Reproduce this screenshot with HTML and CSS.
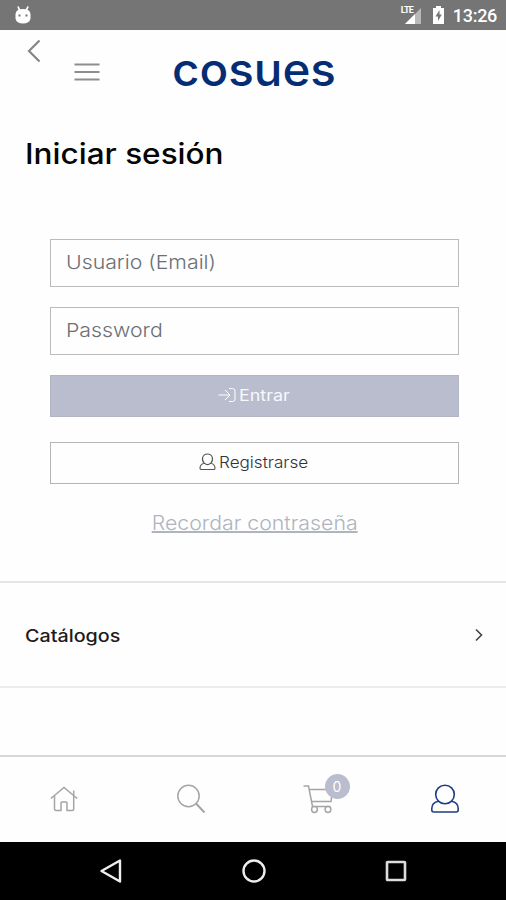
FILE: index.html
```html
<!DOCTYPE html>
<html lang="es">
<head>
<meta charset="utf-8">
<title>Iniciar sesión</title>
<link rel="stylesheet" href="styles.css">
</head>
<body>
<div class="status">
  <svg class="droid" width="18" height="20" viewBox="0 0 18 20"><path d="M4 1.500 5.500 5M14 1.500 12.500 5" stroke="#fff" stroke-width="1.800"/><path d="M1.500 9Q2 4 9 4t7.500 5v4.500Q15.500 18.500 9 18.500T1.500 13.500z" fill="#fff"/><path d="M4.500 9.500h2v2h-2zM11.500 9.500h2v2h-2z" fill="#777"/></svg>
  <span class="spacer"></span>
  <span class="signal"><span class="lte">LTE</span><svg width="22" height="20" viewBox="0 0 22 20"><path d="M5 18 21 2v16z" fill="#b9b9b9"/><path d="M5 18 15 8v10z" fill="#fff"/></svg></span>
  <svg class="battery" width="13" height="20" viewBox="0 0 13 20"><path d="M4 1h5v2h3v16H1V3h3z" fill="#fff"/><path d="M7.500 5 3.500 11.500h2.500V16l3.800-6.500H7.500z" fill="#757575"/></svg>
  <span class="clock">13:26</span>
</div>
<header class="header">
  <svg class="back" width="16" height="24" viewBox="0 0 16 24"><path d="M13.500 1.500 3 12 13.500 22.500" fill="none" stroke="#858585" stroke-width="2.200"/></svg>
  <svg class="burger" width="26" height="20" viewBox="0 0 26 20"><path d="M.5 2.500h25M.5 10h25M.5 17.500h25" stroke="#8d8d8d" stroke-width="1.900"/></svg>
  <svg class="logo" width="180" height="70" viewBox="0 0 180 70"><text y="50" textLength="164" lengthAdjust="spacingAndGlyphs" x="6">cosues</text></svg>
</header>
<main>
  <h1 class="title"><span class="wide">Iniciar sesión</span></h1>
  <form class="form">
    <div class="field"><span class="wide">Usuario (Email)</span></div>
    <div class="field"><span class="wide">Password</span></div>
    <div class="btn primary"><svg width="18" height="16" viewBox="0 0 18 16"><path d="M.5 8h11.500M7 3l5 5-5 5M11 1.500h3.500Q17 1.500 17 4v8q0 2.500-2.500 2.500H11" fill="none" stroke="#fff" stroke-width="1"/></svg><span class="wide">Entrar</span></div>
    <div class="btn outline"><svg width="17" height="18" viewBox="0 0 17 18"><path d="M5.300 10.200C2 7 3.200 1 8.500 1s6.500 6 3.200 9.200M5.300 10.200q3.200 2.800 6.400 0 4.300 1 4.300 5 0 1.300-1.300 1.300H2.300Q1 16.500 1 15.200q0-4 4.300-5z" fill="none" stroke="#555" stroke-width="1.100"/></svg><span class="wide">Registrarse</span></div>
    <a class="forgot">Recordar contraseña</a>
  </form>
  <div class="row"><span class="wide">Catálogos</span><svg width="10" height="14" viewBox="0 0 10 14"><path d="m2 1.500 5.500 5.500L2 12.500" fill="none" stroke="#444" stroke-width="1.600"/></svg></div>
</main>
<nav class="tabs">
  <svg width="28" height="28" viewBox="0 0 28 28"><path d="M.8 13.500 14 2.500l13.200 11M4.500 10.500V24q0 1.500 1.500 1.500h5V18q0-1 1-1h4q1 0 1 1v7.500h5.200q1.500 0 1.500-1.500V5.500" fill="none" stroke="#a5a5a5" stroke-width="1.500"/></svg>
  <svg width="30" height="30" viewBox="0 0 30 30"><circle cx="12.500" cy="12" r="10.700" fill="none" stroke="#a5a5a5" stroke-width="1.500"/><path d="m20 19.500 8.500 9" stroke="#a5a5a5" stroke-width="2"/></svg>
  <span class="cart"><svg width="30" height="30" viewBox="0 0 30 30"><path d="M.5 2H5.500L9.500 22.500h18M6.500 5.500h23L28 17.500H8.500" fill="none" stroke="#a5a5a5" stroke-width="1.500"/><g fill="#fff" stroke="#a5a5a5" stroke-width="1.500"><circle cx="11.500" cy="25.500" r="2.900"/><circle cx="25" cy="25.500" r="2.900"/></g></svg><b class="badge">0</b></span>
  <svg width="28" height="30" viewBox="0 0 28 30"><g fill="none" stroke="#213c83" stroke-width="1.600"><circle cx="14" cy="10.500" r="9.300"/><path d="M7.500 17.300Q.8 18.500.8 24.500V26q0 2 2 2h22.400q2 0 2-2v-1.500q0-6-6.700-7.200"/></g></svg>
</nav>
<div class="android">
  <svg width="24" height="26" viewBox="0 0 24 26"><path d="M21 2.500v21L2.500 13z" fill="none" stroke="#eee" stroke-width="2.400" stroke-linejoin="round"/></svg>
  <svg width="26" height="26" viewBox="0 0 26 26"><circle cx="13" cy="13" r="10.500" fill="none" stroke="#eee" stroke-width="2.400"/></svg>
  <svg width="24" height="24" viewBox="0 0 24 24"><rect x="3" y="3" width="18" height="18" rx=".5" fill="none" stroke="#ddd" stroke-width="2.600"/></svg>
</div>
</body>
</html>
```
FILE: styles.css
```css
* { box-sizing: border-box; }
body { margin: 0; width: 506px; height: 900px; overflow: hidden; display: flex; flex-direction: column; background: #fefefe; color: #111; font-family: Inter, "Liberation Sans", sans-serif; }
svg { display: block; flex: none; }
.wide { display: inline-block; transform: scaleX(1.12); transform-origin: left center; }
.status { height: 30px; flex: none; background: #757575; display: flex; align-items: center; padding: 0 9px 0 14px; color: #fff; }
.spacer { flex: 1; }
.signal { position: relative; margin: 2px 10px 0 0; }
.lte { position: absolute; left: 1px; top: 0; font: 700 9px/9px Roboto, sans-serif; letter-spacing: -.8px; }
.battery { margin-right: 8px; }
.clock { font: 500 18px/30px Roboto, sans-serif; padding-top: 2px; letter-spacing: -.3px; }
.header { height: 92px; flex: none; display: flex; align-items: flex-start; padding-left: 26px; }
.back { margin-top: 9px; }
.burger { margin: 32px 0 0 32px; }
.logo { margin: 6px 0 0 66px; }
.logo text { font: 500 46px Inter, sans-serif; fill: #062d73; }
main { flex: 1; }
.title { margin: 12px 0 0 25px; height: 40px; font-size: 28px; line-height: 40px; font-weight: 500; color: #050505; }
.title .wide { transform: scaleX(1.126); }
.form { margin: 65px 47px 0 50px; display: flex; flex-direction: column; }
.field { height: 48px; margin-bottom: 20px; border: 1.500px solid #b9bbbd; padding-left: 15px; font-size: 19px; line-height: 45px; font-weight: 300; color: #6b7075; }
.btn { height: 42px; display: flex; align-items: center; justify-content: center; gap: 3px; font-size: 16px; padding: 0 7px 2px 0; }
.primary { background: #babdcd; color: #f7f8fc; border: 1px solid #b1b4c3; }
.outline { margin-top: 25px; border: 1.500px solid #b5b5b5; color: #333; font-weight: 300; }
.outline .wide { transform: scaleX(1.07); }
.forgot { align-self: center; margin-top: 26px; font-size: 20px; line-height: 26px; font-weight: 300; color: #b0b4bf; text-decoration: underline; transform: scaleX(1.065); }
.row { margin-top: 45px; height: 107px; border-top: 2px solid #e5e5e5; border-bottom: 2px solid #ececec; display: flex; justify-content: space-between; align-items: center; padding: 0 22px 0 25px; font-size: 17px; font-weight: 500; color: #1c1c1c; }
.row .wide { transform: scaleX(1.16); padding-top: 3px; }
.tabs { height: 87px; flex: none; border-top: 2px solid #d7d7d7; display: grid; grid-template-columns: repeat(4, 1fr); width: 508px; justify-items: center; align-items: center; padding-bottom: 2px; }
.cart { position: relative; }
.badge { position: absolute; left: 22px; top: -10px; width: 25px; height: 25px; border-radius: 50%; background: #babdcd; color: #fff; font-size: 14px; line-height: 25px; font-weight: 400; text-align: center; }
.android { height: 58px; flex: none; background: #000; display: flex; justify-content: space-between; align-items: center; padding: 0 98px 0 99px; }
```
